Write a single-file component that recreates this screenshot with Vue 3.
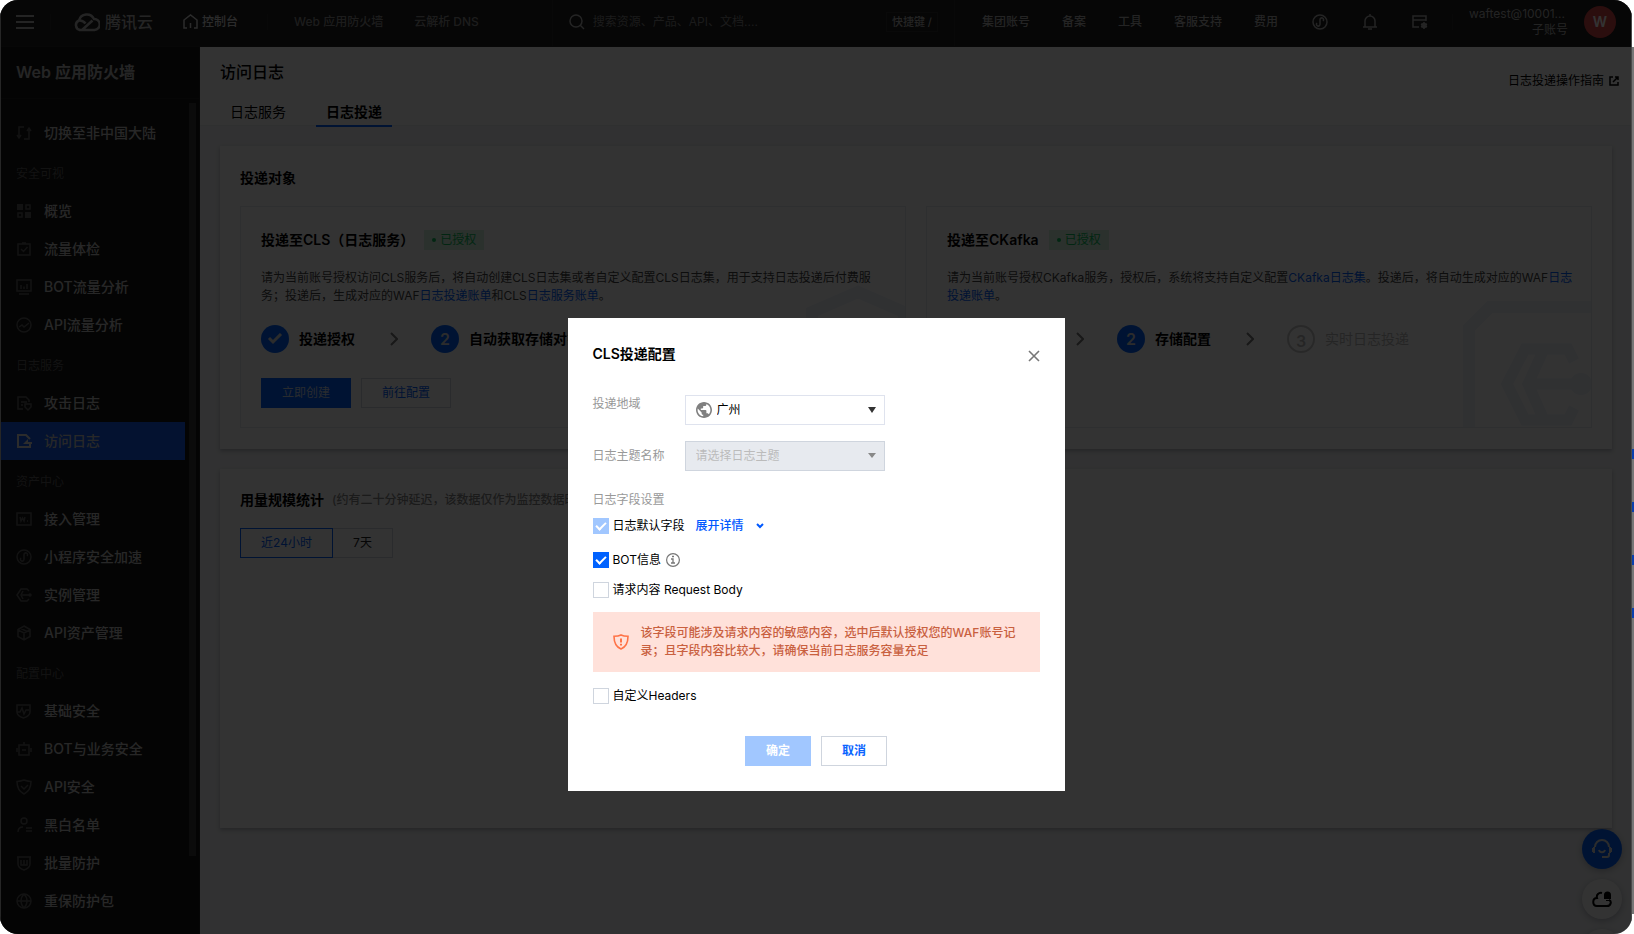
<script setup>
import { ref } from 'vue'

const icons = {
  switch: '<path d="M3 12V2h5M1 10l2 3 2-3M8 14h5V4M11 6l2-3 2 3"/>',
  grid: '<path fill="currentColor" stroke="none" d="M1 1h6v6H1zM9 9h6v6H9z"/><path d="M10 2h4v4h-4zM2 10h4v4H2z"/>',
  check: '<path d="M2 3h12v11H2zM6 2h4M5 8l2.500 2.500L11.500 6"/>',
  monitor: '<path d="M1 1h14v11H1zM3 15h10M5 6v4M8 7.500V10M11 5v5"/>',
  trend: '<circle cx="8" cy="8" r="7"/><path d="M3 10l3-2 2 2 5-4"/>',
  logShield: '<path d="M7 14H2V2h8l3 3v2M5 7h6M5 10h2M9 9h6v3l-3 3-3-3z"/>',
  logOut: '<path d="M14 11v3H2V2h8l4 4"/><path fill="currentColor" stroke="none" d="M7 11l5-5v3h4v2z"/>',
  domain: '<path d="M1 2h14v12H1zM4 6l1 4 1.500-3L8 10l1-4M11 10h1"/>',
  mini: '<circle cx="8" cy="8" r="7"/><path d="M5 9a1.800 1.800 0 1 0 3 1V6a1.800 1.800 0 1 1 3 1"/>',
  instance: '<path d="M13 4l-2-2H5L1 8l4 6h6l2-2M7 4L5 8l2 4M6 8h8"/><circle cx="14" cy="8" r="1"/>',
  cube: '<path d="M8 1l6 3.500v7L8 15l-6-3.500v-7zM2 5l6 3 6-3M8 8v7M5 3.500l6 3"/>',
  pulse: '<path d="M1 2h13v7c0 3-3 5-6.500 6C4 14 1 12 1 9zM1 9h3l2-4 2 6 2-4h3"/>',
  bot: '<path d="M3 4h10v10H3zM8 4V1M6 9h4M1 7v4M15 7v4"/>',
  shieldOk: '<path d="M8 1c3 1 5 1.500 7 1.500 0 6-2 10-7 12.500C3 12.500 1 8.500 1 2.500 3 2.500 5 2 8 1zM5 7l3 3 4-4"/>',
  user: '<circle cx="8" cy="4" r="3"/><path d="M2 15c0-3 2-5 5-5M10 11h6M10 14h6"/>',
  shieldW: '<path d="M1 2h14M2 2v7c0 3 3 5 6 6 3-1 6-3 6-6V2M5 5v5h6V5M8 5v5"/>',
  globe: '<circle cx="8" cy="8" r="7"/><path d="M1 8h14M8 1C4 5 4 11 8 15M8 1c4 4 4 10 0 14"/>',
}

const groups = [
  { items: [['switch', '切换至非中国大陆']] },
  { title: '安全可视', items: [['grid', '概览'], ['check', '流量体检'], ['monitor', 'BOT流量分析'], ['trend', 'API流量分析']] },
  { title: '日志服务', items: [['logShield', '攻击日志'], ['logOut', '访问日志']] },
  { title: '资产中心', items: [['domain', '接入管理'], ['mini', '小程序安全加速'], ['instance', '实例管理'], ['cube', 'API资产管理']] },
  { title: '配置中心', items: [['pulse', '基础安全'], ['bot', 'BOT与业务安全'], ['shieldOk', 'API安全'], ['user', '黑白名单'], ['shieldW', '批量防护'], ['globe', '重保防护包']] },
]
const current = '访问日志'
const tools = ['集团账号', '备案', '工具', '客服支持', '费用']

const region = ref('gz')
const botInfo = ref(true)
const requestBody = ref(false)
const customHeaders = ref(false)
</script>

<template>
  <div class="edge" aria-hidden="true"><i></i><i></i><i></i><i></i></div>
  <div class="frame">
    <header class="topbar">
      <button class="plain menu" aria-label="菜单"><svg width="18" height="14" viewBox="0 0 18 14"><path d="M0 1h18M0 7h18M0 13h18" stroke="currentColor" stroke-width="2" /></svg></button>
      <span class="tick"></span>
      <a class="brand" href="#">
        <svg width="26" height="20" viewBox="0 0 26 20" fill="none" stroke="currentColor" stroke-width="2.500"><path d="M10 18H6a5 5 0 0 1-1-9.500A8 8 0 0 1 20 7a5.500 5.500 0 0 1 .500 11H8L18.500 8.500M5 8.500c3-.500 5 1 6.500 3" /></svg>
        <span>腾讯云</span>
      </a>
      <a class="home" href="#"><svg width="15" height="15" viewBox="0 0 15 15" fill="none" stroke="currentColor" stroke-width="1.500"><path d="M4 14H1V6l6.500-5L14 6v8h-3M7.500 14V9" /></svg>控制台</a>
      <span class="tick"></span>
      <a class="product first" href="#">Web 应用防火墙</a>
      <a class="product" href="#">云解析 DNS</a>
      <label class="search">
        <svg width="16" height="16" viewBox="0 0 16 16" fill="none" stroke="currentColor" stroke-width="1.500"><circle cx="7" cy="7" r="6" /><path d="M11 11l4 4" /></svg>
        <input type="text" placeholder="搜索资源、产品、API、文档...." aria-label="搜索" />
        <kbd>快捷键 /</kbd>
      </label>
      <nav class="tools"><a v-for="t in tools" :key="t" href="#">{{ t }}</a></nav>
      <button class="plain tool" aria-label="小程序"><svg class="ico" viewBox="0 0 16 16" v-html="icons.mini"></svg></button>
      <button class="plain tool" aria-label="消息"><svg class="ico" viewBox="0 0 16 16"><path d="M1 13h14M3 13V7a5 5 0 0 1 10 0v6M6 15h4M8 0v2" /></svg></button>
      <button class="plain tool" aria-label="设置"><svg class="ico" viewBox="0 0 16 16"><path d="M7 13H1V2h13v5M1 6h13M12 8v7M9 10l6 3M15 10l-6 3" /><circle cx="12" cy="11.500" r="2" /></svg></button>
      <span class="tick last"></span>
      <div class="account"><span class="acc-name">waftest@10001...</span><span>子账号</span></div>
      <span class="avatar">W</span>
    </header>

    <div class="body">
      <aside class="side">
        <h2>Web 应用防火墙</h2>
        <div class="side-scroll">
          <nav>
            <template v-for="(g, i) in groups" :key="i">
              <p v-if="g.title">{{ g.title }}</p>
              <a v-for="[icon, label] in g.items" :key="label" href="#" :class="{ active: label === current }">
                <svg class="ico" viewBox="0 0 16 16" v-html="icons[icon]"></svg>{{ label }}
              </a>
            </template>
          </nav>
          <span class="bar"></span>
        </div>
      </aside>

      <main>
        <div class="page-head">
          <div>
            <h1>访问日志</h1>
            <div class="tabs" role="tablist">
              <button class="plain" role="tab">日志服务</button>
              <button class="plain on" role="tab" aria-selected="true">日志投递</button>
            </div>
          </div>
          <a class="guide" href="#">日志投递操作指南<svg width="10" height="10" viewBox="0 0 10 10" fill="none" stroke="currentColor" stroke-width="1.500"><path d="M4 1H1v8h8V6M6 1h3v3M9 1L4 6" /></svg></a>
        </div>

        <div class="content">
          <section class="card">
            <h3>投递对象</h3>
            <div class="targets">
              <article>
                <h4>投递至CLS（日志服务）<span class="badge">已授权</span></h4>
                <p>请为当前账号授权访问CLS服务后，将自动创建CLS日志集或者自定义配置CLS日志集，用于支持日志投递后付费服务；投递后，生成对应的WAF<a href="#">日志投递账单</a>和CLS<a href="#">日志服务账单</a>。</p>
                <ol class="steps">
                  <li><span class="num"><svg width="16" height="12" viewBox="0 0 16 12" fill="none" stroke="currentColor" stroke-width="3"><path d="M2 5l4 4 8-8" /></svg></span>投递授权<svg class="chev" viewBox="0 0 8 14"><path d="M1 1l6 6-6 6" /></svg></li>
                  <li><span class="num">2</span>自动获取存储对象<svg class="chev" viewBox="0 0 8 14"><path d="M1 1l6 6-6 6" /></svg></li>
                </ol>
                <div class="acts"><button class="btn fill">立即创建</button><button class="btn">前往配置</button></div>
                <svg class="mark" width="128" height="142" viewBox="0 0 128 142" fill="none" stroke="currentColor" stroke-width="12"><path d="M35 44V27L81 7l46 20v90" /></svg>
              </article>
              <article>
                <h4>投递至CKafka<span class="badge">已授权</span></h4>
                <p>请为当前账号授权CKafka服务，授权后，系统将支持自定义配置<a href="#">CKafka日志集</a>。投递后，将自动生成对应的WAF<a href="#">日志投递账单</a>。</p>
                <ol class="steps">
                  <li><span class="num"><svg width="16" height="12" viewBox="0 0 16 12" fill="none" stroke="currentColor" stroke-width="3"><path d="M2 5l4 4 8-8" /></svg></span>投递授权<svg class="chev" viewBox="0 0 8 14"><path d="M1 1l6 6-6 6" /></svg></li>
                  <li><span class="num">2</span>存储配置<svg class="chev" viewBox="0 0 8 14"><path d="M1 1l6 6-6 6" /></svg></li>
                  <li class="todo"><span class="num">3</span>实时日志投递</li>
                </ol>
                <svg class="mark" width="128" height="126" viewBox="0 0 128 126" fill="none" stroke="currentColor" stroke-width="12"><path d="M6 126V27L27 6H128" /><path stroke-width="11" d="M111 60l-6-12H62L44 83l18 36h43l6-12M81 48L65 83l16 36M66 83h50" /><circle cx="118" cy="83" r="11" fill="currentColor" stroke="none" /></svg>
              </article>
            </div>
          </section>

          <section class="card usage">
            <h3>用量规模统计<small>(约有二十分钟延迟，该数据仅作为监控数据时参考，实际用量以账单为准)</small></h3>
            <div class="seg"><button class="btn sel">近24小时</button><button class="btn day">7天</button></div>
          </section>
        </div>
      </main>
    </div>

    <div class="floats">
      <button class="plain blue" aria-label="客服"><svg width="20" height="20" viewBox="0 0 20 20" fill="none" stroke="currentColor" stroke-width="2"><path d="M3 8a7 7 0 0 1 14 0M2 8v6M18 8v6M1 9v4M19 9v4M17 14v2a2 2 0 0 1-2 2h-5M7 11c1 3 5 3 6 0" /></svg></button>
      <button class="plain" aria-label="云助手"><svg width="20" height="17" viewBox="0 0 20 17" fill="none" stroke="currentColor" stroke-width="2"><path d="M10 2C7 1 4 4 5 7 0 7 0 15 5 15h10c4 0 5-5 2-6" /><path fill="currentColor" stroke="none" d="M12 8V4a3.500 3.500 0 0 1 7 0v4zM14 9h3v1h-3z" /></svg></button>
      <button class="plain" aria-label="更多"></button>
    </div>

    <div class="mask">
      <form class="dialog" role="dialog" aria-labelledby="dlg-title" @submit.prevent>
        <div class="dlg-head">
          <h2 id="dlg-title">CLS投递配置</h2>
          <button type="button" class="plain close" aria-label="关闭"><svg width="12" height="12" viewBox="0 0 12 12"><path d="M1 1l10 10M11 1L1 11" stroke="currentColor" stroke-width="1.600" /></svg></button>
        </div>
        <div class="row">
          <label class="top" for="region">投递地域</label>
          <div class="select">
            <svg class="earth" width="16" height="16" viewBox="2 2 20 20"><path fill="currentColor" d="M12 2C6.480 2 2 6.480 2 12s4.480 10 10 10 10-4.480 10-10S17.520 2 12 2zm-1 17.930c-3.950-.490-7-3.850-7-7.930 0-.620.080-1.210.210-1.790L9 15v1c0 1.100.900 2 2 2v1.930zm6.900-2.540c-.260-.810-1-1.390-1.900-1.390h-1v-3c0-.550-.450-1-1-1H8v-2h2c.550 0 1-.450 1-1V7h2c1.100 0 2-.900 2-2v-.410c2.930 1.190 5 4.060 5 7.410 0 2.080-.800 3.970-2.100 5.390z" /></svg>
            <select id="region" v-model="region" class="with-icon"><option value="gz">广州</option></select>
            <svg class="arrow" width="8" height="6" viewBox="0 0 8 6"><path fill="currentColor" d="M0 0h8L4 6z" /></svg>
          </div>
        </div>
        <div class="row">
          <label for="topic">日志主题名称</label>
          <div class="select off">
            <select id="topic" disabled><option>请选择日志主题</option></select>
            <svg class="arrow" width="8" height="5" viewBox="0 0 8 5"><path fill="currentColor" d="M0 0h8L4 5z" /></svg>
          </div>
        </div>
        <p class="legend">日志字段设置</p>
        <div class="check r1">
          <label><input type="checkbox" checked disabled />日志默认字段</label>
          <button type="button" class="plain more">展开详情<svg width="8" height="6" viewBox="0 0 8 6" fill="none" stroke="currentColor" stroke-width="2"><path d="M1 1l3 3 3-3" /></svg></button>
        </div>
        <div class="check r2">
          <label><input v-model="botInfo" type="checkbox" />BOT信息</label>
          <svg class="info" width="14" height="14" viewBox="0 0 14 14" fill="none" stroke="currentColor"><circle cx="7" cy="7" r="6.400" stroke-width="1.200" /><path d="M5 6h2v4M5 10h4M6 3.500h2" stroke-width="1.300" /></svg>
        </div>
        <div class="check r3"><label><input v-model="requestBody" type="checkbox" />请求内容 Request Body</label></div>
        <div class="alert" role="alert">
          <svg width="16" height="16" viewBox="0 0 16 16" fill="none" stroke="currentColor" stroke-width="1.600"><path d="M8 1c2 1 4.500 1.300 7 1.300C15 8.500 13 13 8 15 3 13 1 8.500 1 2.300 3.500 2.300 6 2 8 1z" /><path d="M8 4.500v4M8 9.700v1.800" stroke-width="2" /></svg>
          <p>该字段可能涉及请求内容的敏感内容，选中后默认授权您的WAF账号记录；且字段内容比较大，请确保当前日志服务容量充足</p>
        </div>
        <div class="check"><label><input v-model="customHeaders" type="checkbox" />自定义Headers</label></div>
        <div class="dlg-foot">
          <button type="submit" class="btn ok" disabled>确定</button>
          <button type="button" class="btn cancel">取消</button>
        </div>
      </form>
    </div>
  </div>
</template>

<style>
html, body { margin: 0; background: #fff; }
</style>

<style scoped>
* { box-sizing: border-box; }
.frame, .frame button, .frame input, .frame select, .frame kbd { font-family: Inter, "Noto Sans CJK SC", sans-serif; }
.frame {
  position: relative; display: flex; flex-direction: column; height: 100vh; margin-right: 2px;
  border-radius: 18px; overflow: hidden; background: #f3f4f7; color: #000; font-size: 12px; line-height: 18px;
}
h1, h2, h3, h4, p, ol { margin: 0; padding: 0; }
a { color: #0062ff; text-decoration: none; }
.plain { padding: 0; border: 0; background: none; color: inherit; font-size: inherit; line-height: inherit; display: block; }
svg { flex: none; display: block; }
.ico { width: 16px; height: 16px; fill: none; stroke: currentColor; stroke-width: 1.500; }

.edge { position: absolute; right: 0; top: 47px; bottom: 20px; width: 20px; background: #777; display: flex; flex-direction: column; gap: 43px; padding-top: 402px; box-sizing: border-box; }
.edge i { height: 10px; background: #0a3fae; margin-left: 18px; }

.topbar { display: flex; align-items: center; height: 47px; flex: none; padding: 0 16px 3px; background: #1e1e1e; color: #b4b4b4; border-bottom: 1px solid #262626; font-weight: 500; }
.topbar a { color: inherit; white-space: nowrap; }
.tick { width: 1px; height: 16px; background: #2c2c2c; margin-left: 16px; }
.brand { display: flex; align-items: center; gap: 5px; margin-left: 23px; font-size: 16px; }
.home { display: flex; align-items: center; gap: 4px; margin: 0 13px 0 30px; color: #d8d8d8 !important; }
.product { margin-right: 31px; color: #8e8e8e !important; }
.product.first { margin-left: 26px; }
.search { flex: 1; display: flex; align-items: center; align-self: stretch; gap: 8px; margin-left: 42px; margin-bottom: -3px; padding: 0 16px 3px; border: solid #2a2a2a; border-width: 0 1px; }
.search input { flex: 1; min-width: 0; border: 0; padding: 0; background: none; font-size: 12px; color: #ccc; outline: 0; }
.search input::placeholder { color: #858585; opacity: 1; }
.search kbd { border: 1px solid #2e2e2e; padding: 0 5px; font-size: 11px; white-space: nowrap; }
.tools { display: flex; gap: 32px; margin-left: 27px; }
.tool { margin-left: 34px; }
.last { margin-left: 24px; }
.account { display: flex; flex-direction: column; align-items: flex-end; width: 115px; line-height: 16px; font-weight: 400; color: #b0b0b0; }
.acc-name { margin-right: 3px; }
.avatar { width: 32px; height: 32px; margin-left: 16px; border-radius: 50%; background: #d84545; color: #fff; font-size: 14px; font-weight: 600; line-height: 32px; text-align: center; }

.body { flex: 1; display: flex; min-height: 0; }
.side { width: 200px; flex: none; background: #141414; color: #b8b8b8; display: flex; flex-direction: column; border-right: 1px solid #222; }
.side h2 { padding: 13px 16px 14px; font-size: 16px; line-height: 24px; font-weight: 600; border-bottom: 1px solid #222; }
.side-scroll { flex: 1; min-height: 0; display: flex; }
.side nav { flex: 1; padding-top: 15px; }
.side nav p { height: 40px; padding: 13px 16px 0; line-height: 18px; color: #5c5c5c; }
.side nav a { display: flex; align-items: center; gap: 12px; height: 38px; padding-left: 16px; font-size: 14px; font-weight: 500; color: #c4c4c4; }
.side nav a .ico { color: #5c5c5c; }
.side nav a.active { background: #145cf0; color: #c8c8c8; }
.side nav a.active .ico { color: #ddd; stroke-width: 2; }
.bar { width: 7px; margin: 4px 3px 0 4px; height: 753px; background: #3a3a3a; }

main { flex: 1; min-width: 0; }
.page-head { display: flex; justify-content: space-between; padding: 13px 13px 0 20px; height: 79px; background: #fff; border-bottom: 1px solid #ecedf0; }
.page-head h1 { font-size: 16px; line-height: 24px; font-weight: 500; }
.tabs { display: flex; gap: 20px; margin-top: 18px; }
.tabs button { padding: 0 10px 3px; font-size: 14px; line-height: 20px; border-bottom: 2px solid transparent; }
.tabs .on { font-weight: 600; border-color: #0062ff; }
.guide { display: flex; align-items: center; gap: 5px; height: 18px; margin-top: 12px; color: #000; }
.content { padding: 20px; display: flex; flex-direction: column; gap: 20px; }
.card { background: #fff; box-shadow: 0 2px 4px rgba(54, 58, 80, .320); padding: 22px 20px 21px; }
.card h3 { display: flex; align-items: center; font-size: 14px; line-height: 20px; font-weight: 600; margin-bottom: 18px; }
.card h3 small { margin-left: 8px; font-size: 12px; font-weight: 500; color: #888; }
.targets { display: grid; grid-template-columns: 1fr 1fr; gap: 20px; }
article { position: relative; border: 1px solid #e7e9ef; padding: 23px 16px 19px 20px; }
article h4 { display: flex; align-items: center; font-size: 14px; line-height: 20px; font-weight: 600; margin-bottom: 19px; }
.badge { margin-left: 10px; padding: 0 8px; background: #d6f2df; color: #0abf5b; font-size: 12px; font-weight: 400; display: flex; align-items: center; gap: 4px; }
.badge::before { content: ""; width: 4px; height: 4px; border-radius: 50%; background: currentColor; }
article p { color: #444; }
.steps { display: flex; list-style: none; margin-top: 20px; font-size: 14px; font-weight: 600; line-height: 28px; }
.steps li { display: flex; align-items: center; white-space: nowrap; }
.num { width: 28px; height: 28px; margin-right: 10px; border-radius: 50%; background: #0062ff; color: #ddd; display: grid; place-items: center; font-size: 16px; }
.chev { width: 8px; height: 14px; margin: 0 33px 0 35px; fill: none; stroke: #777; stroke-width: 2; }
.todo { color: #bbb; font-weight: 400; }
.todo .num { background: none; border: 2px solid #c8c8c8; font-weight: 600; color: #bbb; }
.acts { display: flex; gap: 10px; margin-top: 25px; }
.btn { height: 30px; padding: 0 20px 3px; border: 1px solid #cfd5de; background: none; color: #0062ff; font-size: 12px; border-radius: 0; }
.acts .btn { width: 90px; }
.btn.fill { background: #0062ff; border-color: #0062ff; color: #c8d4ea; }
.mark { position: absolute; right: 0; bottom: 0; color: #edf2fb; }
.usage { min-height: 359px; padding-top: 21px; }
.seg { display: flex; }
.seg .sel { width: 93px; border-color: #0062ff; }
.seg .day { width: 60px; border-left: 0; color: #222; }

.floats { position: absolute; right: 10px; bottom: -35px; display: flex; flex-direction: column; gap: 10px; }
.floats button { width: 40px; height: 40px; border-radius: 50%; background: #fff; display: grid; place-items: center; box-shadow: 0 2px 6px rgba(54, 58, 80, .320); }
.floats .blue { background: #0062ff; color: #ddd; }

.mask { position: absolute; inset: 0; background: rgba(0, 0, 0, .8); box-shadow: inset 1px 0 #262626, inset -1px 0 #4a4a4a; display: flex; justify-content: center; align-items: flex-start; padding-top: 318px; }
.dialog { width: 497px; background: #fff; padding: 26px 25px 25px; }
.dlg-head { display: flex; justify-content: space-between; align-items: center; margin-bottom: 31px; }
.dlg-head h2 { font-size: 14px; line-height: 20px; font-weight: 600; }
.close { color: #777; padding-top: 4px; }
.row { display: flex; align-items: center; margin-bottom: 16px; }
.row label { width: 92px; color: #999; }
.row .top { align-self: flex-start; }
.select { position: relative; width: 200px; }
.select select { appearance: none; width: 100%; height: 30px; display: block; padding: 0 24px 2px 10px; border: 1px solid #dfe3ee; border-radius: 0; background: #fff; color: #000; font-size: 12px; opacity: 1; }
.select .with-icon { padding-left: 31px; }
.earth { position: absolute; left: 11px; top: 7px; color: #808080; }
.arrow { position: absolute; right: 9px; top: 12px; color: #333; }
.off select { background: #e7eaef; border-color: #cfd5de; color: #bbb; }
.off .arrow { color: #888; }
.legend { color: #999; margin: 20px 0 9px; }
.check { display: flex; align-items: center; height: 16px; }
.check label { display: flex; align-items: center; gap: 4px; }
.check input { appearance: none; width: 16px; height: 16px; margin: 0; border: 1px solid #cfd5de; background: #fff; display: grid; place-items: center; }
.check input:checked { background: #0062ff; border-color: #0062ff; }
.check input:checked:disabled { background: #a1c7ff; border-color: #a1c7ff; }
.check input:checked::before { content: ""; box-sizing: border-box; width: 10px; height: 6px; margin-top: -3px; border: solid #fff; border-width: 0 0 2px 2px; transform: rotate(-45deg); }
.r1 { margin-bottom: 18px; }
.r2, .r3 { margin-bottom: 14px; }
.more { display: flex; align-items: center; gap: 12px; margin-left: 11px; color: #0059ff; font-weight: 500; }
.info { margin-left: 5px; color: #777; }
.alert { display: flex; align-items: center; gap: 12px; padding: 12px 20px; margin-bottom: 16px; background: #ffe1da; color: #c9603f; font-weight: 500; }
.alert svg { color: #ff7347; }
.dlg-foot { display: flex; justify-content: center; gap: 10px; margin-top: 32px; }
.dlg-foot .btn { width: 66px; font-weight: 600; }
.ok { background: #a1c7ff; border-color: #a1c7ff; color: #fff; }
.cancel { color: #0a65ff; }
</style>
